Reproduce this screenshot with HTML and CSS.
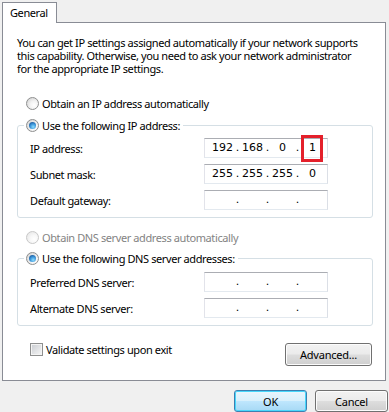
FILE: index.html
```html
<!DOCTYPE html>
<html lang="en">
<head>
    <meta charset="UTF-8">
    <meta name="viewport" content="width=device-width, initial-scale=1.0">
    <title>Internet Protocol Version 4 (TCP/IPv4) Properties</title>
    <link rel="stylesheet" href="styles.css">
</head>
<body>

    <div class="tabbar">
        <div class="tab">General</div>
    </div>

    <div class="panel">
        <p class="intro">
            You can get IP settings assigned automatically if your network supports<br>
            this capability. Otherwise, you need to ask your network administrator<br>
            for the appropriate IP settings.
        </p>

        <div class="option">
            <span class="radio"></span>
            <span>Obtain an IP address automatically</span>
        </div>

        <fieldset class="group">
            <legend class="option">
                <span class="radio on"></span>
                <span>Use the following IP address:</span>
            </legend>
            <div class="row">
                <label>IP address:</label>
                <div class="ipbox">
                    <span class="seg">192</span><span class="dot">.</span>
                    <span class="seg">168</span><span class="dot">.</span>
                    <span class="seg">0</span><span class="dot">.</span>
                    <span class="seg mark">1</span>
                </div>
            </div>
            <div class="row">
                <label>Subnet mask:</label>
                <div class="ipbox">
                    <span class="seg">255</span><span class="dot">.</span>
                    <span class="seg">255</span><span class="dot">.</span>
                    <span class="seg">255</span><span class="dot">.</span>
                    <span class="seg">0</span>
                </div>
            </div>
            <div class="row">
                <label>Default gateway:</label>
                <div class="ipbox">
                    <span class="seg"></span><span class="dot">.</span>
                    <span class="seg"></span><span class="dot">.</span>
                    <span class="seg"></span><span class="dot">.</span>
                    <span class="seg"></span>
                </div>
            </div>
        </fieldset>

        <div class="option disabled dns-auto">
            <span class="radio off"></span>
            <span>Obtain DNS server address automatically</span>
        </div>

        <fieldset class="group dns">
            <legend class="option">
                <span class="radio on"></span>
                <span>Use the following DNS server addresses:</span>
            </legend>
            <div class="row">
                <label>Preferred DNS server:</label>
                <div class="ipbox">
                    <span class="seg"></span><span class="dot">.</span>
                    <span class="seg"></span><span class="dot">.</span>
                    <span class="seg"></span><span class="dot">.</span>
                    <span class="seg"></span>
                </div>
            </div>
            <div class="row">
                <label>Alternate DNS server:</label>
                <div class="ipbox">
                    <span class="seg"></span><span class="dot">.</span>
                    <span class="seg"></span><span class="dot">.</span>
                    <span class="seg"></span><span class="dot">.</span>
                    <span class="seg"></span>
                </div>
            </div>
        </fieldset>

        <div class="footer">
            <div class="check">
                <span class="box"></span>
                <span>Validate settings upon exit</span>
            </div>
            <button class="btn advanced">Advanced...</button>
        </div>
    </div>

    <div class="actions">
        <button class="btn default">OK</button>
        <button class="btn">Cancel</button>
    </div>

</body>
</html>
```

FILE: styles.css
```css
body{
    margin: 0;
    background: #f0f0f0;
    font-family: "Noto Sans", sans-serif;
    font-size: 11px;
    letter-spacing: -0.4px;
    color: #000;
}

.tabbar{
    height: 22px;
    padding: 2px 0 0 2px;
    box-sizing: border-box;
}
.tab{
    display: inline-block;
    height: 21px;
    line-height: 19px;
    padding: 0 8px 0 7px;
    box-sizing: border-box;
    border: 1px solid #898c95;
    border-bottom: none;
    background: #fff;
    position: relative;
    z-index: 1;
}

.panel{
    margin: 0 3px 0 2px;
    height: 359px;
    box-sizing: border-box;
    border: 1px solid #898c95;
    background: #fff;
    padding-top: 13px;
}
.intro{
    margin: 0;
    padding: 0 14px;
    line-height: 13px;
    white-space: nowrap;
}

.option{
    display: flex;
    align-items: center;
    gap: 3px;
    height: 16px;
    white-space: nowrap;
}
.panel > .option{
    margin: 20px 0 0 23px;
}
.option.disabled{
    color: #838383;
}

.radio{
    width: 13px;
    height: 13px;
    box-sizing: border-box;
    border-radius: 50%;
    border: 1px solid #8e8f8f;
    background: radial-gradient(circle at 65% 65%, #fff 0%, #f3f3f3 40%, #cdcdcd 95%);
    display: flex;
    align-items: center;
    justify-content: center;
}
.radio.on::after{
    content: '';
    width: 7px;
    height: 7px;
    border-radius: 50%;
    background: radial-gradient(circle at 60% 70%, #8ddcfc 0%, #3b95da 45%, #0c3977 100%);
}
.radio.off{
    border-color: #c8c8c8;
    background: radial-gradient(circle at 65% 65%, #fff 0%, #f7f7f7 40%, #e3e3e3 95%);
}

.group{
    margin: 6px 12px 0 14px;
    padding: 5px 0 7px 6px;
    border: 1px solid #d5dfe5;
    border-radius: 3px;
}
.group legend{
    padding: 0 3px 0 2px;
}
.group.dns{
    margin-top: 5px;
    padding-top: 6px;
}
.dns-auto{
    margin-top: 11px !important;
}

.row{
    display: flex;
    align-items: center;
    padding-left: 6px;
    height: 20px;
}
.row + .row{
    margin-top: 6px;
}
.row label{
    width: 174px;
}

.ipbox{
    display: flex;
    width: 124px;
    height: 20px;
    box-sizing: border-box;
    padding-left: 5px;
    border: 1px solid;
    border-color: #abadb3 #dbdfe6 #e3e9ef #e2e3ea;
    font-family: "DejaVu Sans", sans-serif;
    font-size: 11px;
    letter-spacing: 0;
    line-height: 18px;
}
.ipbox .seg{
    width: 25px;
    text-align: center;
    position: relative;
}
.ipbox .dot{
    width: 5px;
    text-align: center;
}
.ipbox .seg.mark::after{
    content: '';
    position: absolute;
    left: 1px;
    top: -4px;
    width: 22px;
    height: 27px;
    box-sizing: border-box;
    border: 3px solid #e4202b;
}

.footer{
    display: flex;
    justify-content: space-between;
    align-items: flex-start;
    margin: 15px 13px 0 27px;
}
.check{
    display: flex;
    align-items: center;
    gap: 3px;
    height: 16px;
}
.check .box{
    width: 13px;
    height: 13px;
    box-sizing: border-box;
    border: 1px solid #8e8f8f;
    box-shadow: inset 0 0 0 1px #f4f4f4;
    background: linear-gradient(135deg, #c9ccd1, #f7f7f7);
}

.btn{
    font-family: inherit;
    font-size: 11px;
    letter-spacing: -0.2px;
    color: #000;
    height: 23px;
    padding: 0;
    border: 1px solid #707070;
    border-radius: 3px;
    background: linear-gradient(#f2f2f2 0%, #ebebeb 48%, #dddddd 52%, #cfcfcf 100%);
    box-shadow: inset 0 0 0 1px #fcfcfc;
}
.advanced{
    width: 87px;
    margin-top: 2px;
}

.actions{
    display: flex;
    justify-content: flex-end;
    gap: 8px;
    padding: 9px 1px 0 0;
}
.actions .btn{
    width: 73px;
    height: 22px;
}
.btn.default{
    border-color: #3c7fb1;
    background: linear-gradient(#eaf6fd 0%, #d9f0fc 48%, #bee6fd 52%, #a7d9f5 100%);
    box-shadow: inset 0 0 0 1px #48d7fb;
}
```
